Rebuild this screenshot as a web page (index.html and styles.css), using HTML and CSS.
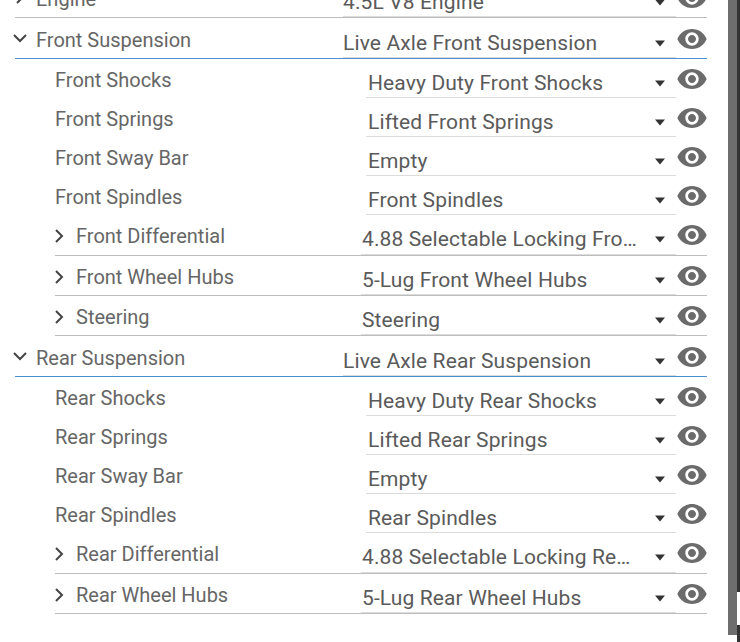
FILE: index.html
```html
<!DOCTYPE html>
<html lang="en">
<head>
    <meta charset="UTF-8">
    <meta name="viewport" content="width=device-width, initial-scale=1.0">
    <title>Vehicle Parts</title>
    <link rel="stylesheet" href="styles.css">
</head>
<body>
    <svg class="defs" width="0" height="0">
        <symbol id="eye" viewBox="0 0 24 24"><path d="M12 4.5C7 4.5 2.73 7.61 1 12c1.73 4.39 6 7.5 11 7.5s9.27-3.11 11-7.5c-1.73-4.39-6-7.5-11-7.5zM12 17c-2.76 0-5-2.24-5-5s2.24-5 5-5 5 2.24 5 5-2.24 5-5 5zm0-8c-1.66 0-3 1.34-3 3s1.34 3 3 3 3-1.34 3-3-1.34-3-3-3z"/></symbol>
        <symbol id="caret" viewBox="0 0 10 6"><path d="M0 0h10L5 6z"/></symbol>
        <symbol id="right" viewBox="0 0 16 16"><path d="M5 2l6 6-6 6" fill="none" stroke="currentColor" stroke-width="2"/></symbol>
        <symbol id="down" viewBox="0 0 16 16"><path d="M2 5l6 6 6-6" fill="none" stroke="currentColor" stroke-width="2"/></symbol>
    </svg>

    <main class="tree">
        <div class="row top">
            <svg class="chev"><use href="#right"/></svg>
            <span class="label">Engine</span>
            <div class="select"><span class="value">4.5L V8 Engine</span><svg class="caret"><use href="#caret"/></svg></div>
            <svg class="eye"><use href="#eye"/></svg>
        </div>

        <div class="row top open">
            <svg class="chev"><use href="#down"/></svg>
            <span class="label">Front Suspension</span>
            <div class="select"><span class="value">Live Axle Front Suspension</span><svg class="caret"><use href="#caret"/></svg></div>
            <svg class="eye"><use href="#eye"/></svg>
        </div>
        <div class="row plain">
            <span class="label">Front Shocks</span>
            <div class="select"><span class="value">Heavy Duty Front Shocks</span><svg class="caret"><use href="#caret"/></svg></div>
            <svg class="eye"><use href="#eye"/></svg>
        </div>
        <div class="row plain">
            <span class="label">Front Springs</span>
            <div class="select"><span class="value">Lifted Front Springs</span><svg class="caret"><use href="#caret"/></svg></div>
            <svg class="eye"><use href="#eye"/></svg>
        </div>
        <div class="row plain">
            <span class="label">Front Sway Bar</span>
            <div class="select"><span class="value">Empty</span><svg class="caret"><use href="#caret"/></svg></div>
            <svg class="eye"><use href="#eye"/></svg>
        </div>
        <div class="row plain">
            <span class="label">Front Spindles</span>
            <div class="select"><span class="value">Front Spindles</span><svg class="caret"><use href="#caret"/></svg></div>
            <svg class="eye"><use href="#eye"/></svg>
        </div>
        <div class="row sub">
            <svg class="chev"><use href="#right"/></svg>
            <span class="label">Front Differential</span>
            <div class="select"><span class="value">4.88 Selectable Locking Front Differential</span><svg class="caret"><use href="#caret"/></svg></div>
            <svg class="eye"><use href="#eye"/></svg>
        </div>
        <div class="row sub">
            <svg class="chev"><use href="#right"/></svg>
            <span class="label">Front Wheel Hubs</span>
            <div class="select"><span class="value">5-Lug Front Wheel Hubs</span><svg class="caret"><use href="#caret"/></svg></div>
            <svg class="eye"><use href="#eye"/></svg>
        </div>
        <div class="row sub">
            <svg class="chev"><use href="#right"/></svg>
            <span class="label">Steering</span>
            <div class="select"><span class="value">Steering</span><svg class="caret"><use href="#caret"/></svg></div>
            <svg class="eye"><use href="#eye"/></svg>
        </div>

        <div class="row top open">
            <svg class="chev"><use href="#down"/></svg>
            <span class="label">Rear Suspension</span>
            <div class="select"><span class="value">Live Axle Rear Suspension</span><svg class="caret"><use href="#caret"/></svg></div>
            <svg class="eye"><use href="#eye"/></svg>
        </div>
        <div class="row plain">
            <span class="label">Rear Shocks</span>
            <div class="select"><span class="value">Heavy Duty Rear Shocks</span><svg class="caret"><use href="#caret"/></svg></div>
            <svg class="eye"><use href="#eye"/></svg>
        </div>
        <div class="row plain">
            <span class="label">Rear Springs</span>
            <div class="select"><span class="value">Lifted Rear Springs</span><svg class="caret"><use href="#caret"/></svg></div>
            <svg class="eye"><use href="#eye"/></svg>
        </div>
        <div class="row plain">
            <span class="label">Rear Sway Bar</span>
            <div class="select"><span class="value">Empty</span><svg class="caret"><use href="#caret"/></svg></div>
            <svg class="eye"><use href="#eye"/></svg>
        </div>
        <div class="row plain">
            <span class="label">Rear Spindles</span>
            <div class="select"><span class="value">Rear Spindles</span><svg class="caret"><use href="#caret"/></svg></div>
            <svg class="eye"><use href="#eye"/></svg>
        </div>
        <div class="row sub">
            <svg class="chev"><use href="#right"/></svg>
            <span class="label">Rear Differential</span>
            <div class="select"><span class="value">4.88 Selectable Locking Rear Differential</span><svg class="caret"><use href="#caret"/></svg></div>
            <svg class="eye"><use href="#eye"/></svg>
        </div>
        <div class="row sub">
            <svg class="chev"><use href="#right"/></svg>
            <span class="label">Rear Wheel Hubs</span>
            <div class="select"><span class="value">5-Lug Rear Wheel Hubs</span><svg class="caret"><use href="#caret"/></svg></div>
            <svg class="eye"><use href="#eye"/></svg>
        </div>
    </main>

    <aside class="scrollbar">
        <div class="thumb"></div>
        <div class="edge"><div class="edge-gap"></div></div>
    </aside>
</body>
</html>
```

FILE: styles.css
```css
* {
    margin: 0;
    padding: 0;
    box-sizing: border-box;
}

html, body {
    height: 100%;
    overflow: hidden;
}

body {
    display: flex;
    background-color: #ffffff;
    font-family: Roboto, "Liberation Sans", sans-serif;
}

.defs {
    position: absolute;
}

.tree {
    flex: 1;
    margin-top: -23px;
    padding: 0 21px 0 15px;
}

.row {
    display: flex;
    align-items: flex-start;
    height: 39px;
}

.label {
    flex: 1;
    color: #666666;
    font-size: 20px;
    line-height: 22px;
    white-space: nowrap;
}

.select {
    display: flex;
    align-items: flex-start;
    height: 100%;
    border-bottom: 1px solid #dcdcdc;
}

.value {
    flex: 1;
    min-width: 0;
    margin-right: 17px;
    overflow: hidden;
    color: #5a5a5a;
    font-size: 21px;
    line-height: 24px;
    letter-spacing: 0.12px;
    white-space: nowrap;
    text-overflow: ellipsis;
}

.caret {
    flex: none;
    width: 10px;
    height: 7px;
    margin: 9px 11px 0 0;
    fill: #333333;
}

.eye {
    flex: none;
    width: 32px;
    height: 32px;
    margin-right: -1px;
    fill: #6b6b6b;
}

.chev {
    flex: none;
    width: 16px;
    height: 16px;
    color: #444444;
}

/* nested leaf rows */
.plain {
    padding-left: 40px;
}

.plain .label {
    padding-top: 10px;
}

.plain .select {
    width: 310px;
    padding: 12px 0 0 2px;
}

.plain .eye {
    margin-top: 4px;
}

/* nested rows that can expand */
.sub {
    height: 40px;
    margin-left: 40px;
    border-bottom: 1px solid #bdbdbd;
}

.plain + .sub {
    height: 41px;
}

.sub .label {
    padding-top: 10px;
}

.sub .chev {
    margin: 13px 9px 0 -4px;
}

.sub .select {
    width: 315px;
    padding: 12px 0 0 1px;
}

.sub .eye {
    margin-top: 4px;
}

/* top level rows */
.top {
    height: 41px;
    border-bottom: 1px solid #bdbdbd;
}

.top .label {
    padding-top: 11px;
}

.top .chev {
    margin: 12px 8px 0 -3px;
}

.top .select {
    width: 333px;
    padding-top: 13px;
}

.top .eye {
    margin-top: 5px;
}

.top .caret {
    margin-top: 9px;
}

.open {
    border-bottom-color: #4a90d2;
}

.scrollbar {
    display: flex;
    flex: none;
    width: 12px;
    align-items: flex-start;
}

.thumb {
    width: 9px;
    height: 635px;
    background-color: #6e6e6e;
}

.edge {
    width: 3px;
    height: 100%;
    padding-top: 592px;
    background-color: #333333;
}

.edge-gap {
    height: 33px;
    background-color: #ffffff;
}
```
